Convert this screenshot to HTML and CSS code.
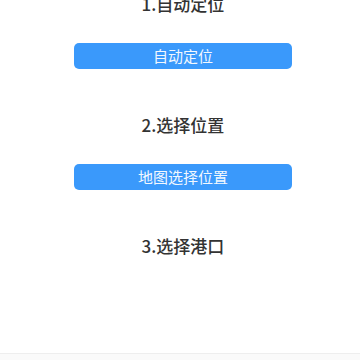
FILE: index.html
```html
<!DOCTYPE html>
<html lang="zh-CN">
<head>
<meta charset="UTF-8">
<meta name="viewport" content="width=device-width, initial-scale=1.0">
<title>选择港口</title>
<link rel="stylesheet" href="styles.css">
</head>
<body>

<div class="content">
  <div class="section">
    <div class="step-title">1.自动定位</div>
    <button class="action-button">自动定位</button>
  </div>

  <div class="section">
    <div class="step-title">2.选择位置</div>
    <button class="action-button">地图选择位置</button>
  </div>

  <div class="section">
    <div class="step-title">3.选择港口</div>
  </div>
</div>

<div class="footer-bar"></div>

</body>
</html>
```

FILE: styles.css
```css
html, body {
  margin: 0;
  height: 100%;
}
body {
  display: flex;
  flex-direction: column;
  overflow: hidden;
  background-color: #fff;
  font-family: 'Noto Sans CJK SC', 'Noto Sans', sans-serif;
  color: #333;
}
.content {
  flex: 1;
  margin: -16px 68px 0 74px;
}
.section {
  display: flex;
  flex-direction: column;
  height: 121px;
}
.step-title {
  height: 40px;
  line-height: 40px;
  text-align: center;
  font-size: 17px;
  font-weight: 500;
  color: #333;
}
.action-button {
  margin-top: 19px;
  height: 26px;
  padding: 0;
  border: none;
  border-radius: 5px;
  background-color: #3a99fb;
  color: #f2f8ff;
  font-family: inherit;
  font-size: 15px;
  line-height: 26px;
  cursor: pointer;
}
.footer-bar {
  height: 6px;
  border-top: 1px solid #eeeeee;
  background-color: #fafafa;
}
```
